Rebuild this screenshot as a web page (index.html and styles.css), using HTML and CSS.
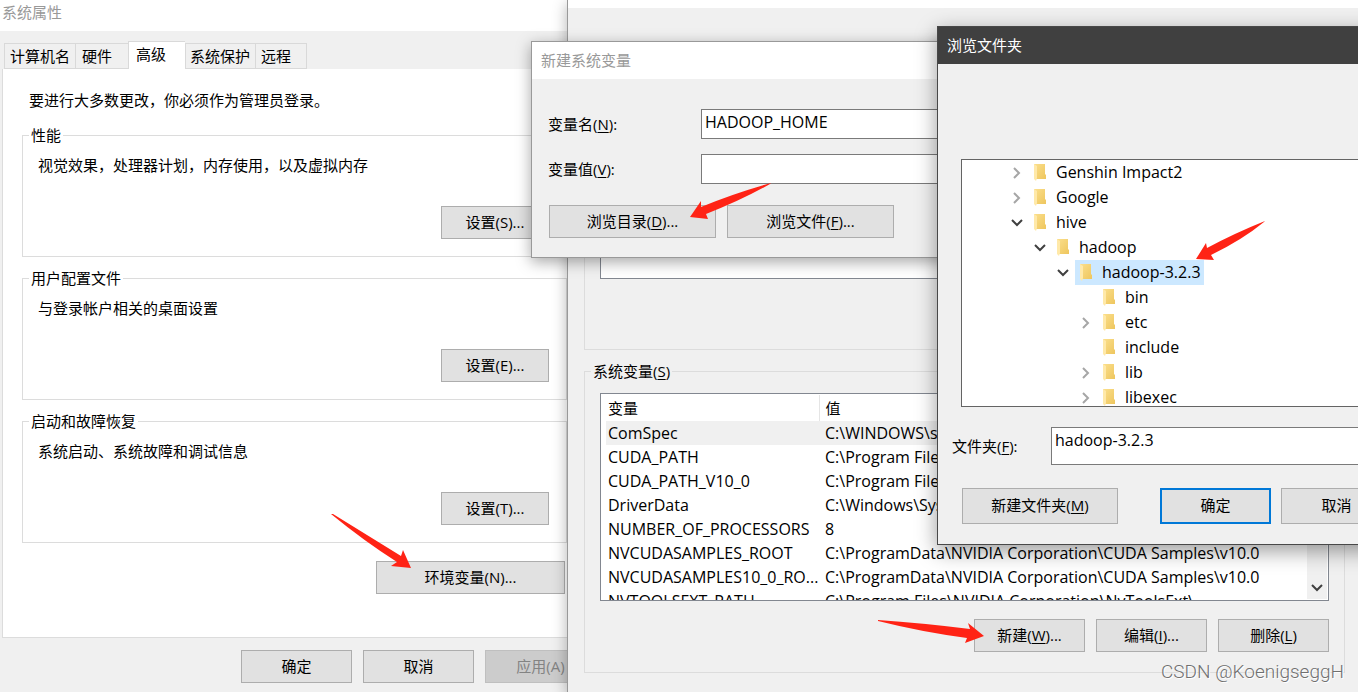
FILE: index.html
```html
<!DOCTYPE html>
<html lang="zh-CN">
<head>
<meta charset="utf-8">
<title>系统属性</title>
<link rel="stylesheet" href="styles.css">
</head>
<body>
<svg class="defs" aria-hidden="true">
  <defs>
    <linearGradient id="folderFill" x1="0" y1="0" x2="1" y2="1">
      <stop offset="0" stop-color="#fbdf8c"/>
      <stop offset="1" stop-color="#eec65e"/>
    </linearGradient>
    <symbol id="folder" viewBox="0 0 13 18">
      <path d="M1 1H12V11L13 12V16H1Z" fill="url(#folderFill)"/>
      <path d="M1 1L4 3V15L3 18L1 16Z" fill="#ffe9a9"/>
    </symbol>
    <symbol id="closed" viewBox="0 0 12 12">
      <path d="M3 1L8 6L3 11" fill="none" stroke="#a6a6a6" stroke-width="2"/>
    </symbol>
    <symbol id="open" viewBox="0 0 12 12">
      <path d="M1 3L6 8L11 3" fill="none" stroke="#404040" stroke-width="2"/>
    </symbol>
  </defs>
</svg>
<main class="desktop">

  <section class="window props">
    <header class="titlebar">系统属性</header>
    <nav class="tabs">
      <button class="tab">计算机名</button>
      <button class="tab">硬件</button>
      <button class="tab active">高级</button>
      <button class="tab">系统保护</button>
      <button class="tab">远程</button>
    </nav>
    <div class="panel">
      <p class="intro">要进行大多数更改，你必须作为管理员登录。</p>
      <fieldset class="group">
        <legend>性能</legend>
        <p>视觉效果，处理器计划，内存使用，以及虚拟内存</p>
        <button class="btn">设置(S)...</button>
      </fieldset>
      <fieldset class="group">
        <legend>用户配置文件</legend>
        <p>与登录帐户相关的桌面设置</p>
        <button class="btn">设置(E)...</button>
      </fieldset>
      <fieldset class="group">
        <legend>启动和故障恢复</legend>
        <p>系统启动、系统故障和调试信息</p>
        <button class="btn">设置(T)...</button>
      </fieldset>
      <button class="btn env-btn">环境变量(N)...</button>
    </div>
    <footer class="props-actions">
      <button class="btn">确定</button>
      <button class="btn">取消</button>
      <button class="btn" disabled>应用(A)</button>
    </footer>
  </section>

  <section class="window env">
    <div class="env-title"></div>
    <div class="env-body">
      <fieldset class="vars user-vars">
        <div class="list"></div>
      </fieldset>
      <fieldset class="vars system-vars">
        <legend>系统变量(<u>S</u>)</legend>
        <div class="list">
          <div class="rows">
            <table class="table">
              <thead>
                <tr><th class="name">变量</th><th>值</th></tr>
              </thead>
              <tbody>
                <tr class="selected"><td>ComSpec</td><td>C:\WINDOWS\sy</td></tr>
                <tr><td>CUDA_PATH</td><td>C:\Program File</td></tr>
                <tr><td>CUDA_PATH_V10_0</td><td>C:\Program File</td></tr>
                <tr><td>DriverData</td><td>C:\Windows\Sys</td></tr>
                <tr><td>NUMBER_OF_PROCESSORS</td><td>8</td></tr>
                <tr><td>NVCUDASAMPLES_ROOT</td><td>C:\ProgramData\NVIDIA Corporation\CUDA Samples\v10.0</td></tr>
                <tr><td>NVCUDASAMPLES10_0_RO...</td><td>C:\ProgramData\NVIDIA Corporation\CUDA Samples\v10.0</td></tr>
                <tr><td>NVTOOLSEXT_PATH</td><td>C:\Program Files\NVIDIA Corporation\NvToolsExt\</td></tr>
              </tbody>
            </table>
          </div>
          <div class="scrollbar"><svg width="12" height="12"><use href="#open"/></svg></div>
        </div>
        <div class="env-actions">
          <button class="btn">新建(<u>W</u>)...</button>
          <button class="btn">编辑(<u>I</u>)...</button>
          <button class="btn">删除(<u>L</u>)</button>
        </div>
      </fieldset>
    </div>
  </section>

  <section class="window newvar">
    <header class="titlebar">新建系统变量</header>
    <div class="newvar-body">
      <div class="field">
        <label for="var-name">变量名(<u>N</u>):</label>
        <input id="var-name" type="text" value="HADOOP_HOME">
      </div>
      <div class="field">
        <label for="var-value">变量值(<u>V</u>):</label>
        <input id="var-value" type="text" value="">
      </div>
      <div class="newvar-actions">
        <button class="btn">浏览目录(<u>D</u>)...</button>
        <button class="btn">浏览文件(<u>F</u>)...</button>
      </div>
    </div>
  </section>

  <section class="window browse">
    <header class="titlebar">浏览文件夹</header>
    <div class="browse-body">
      <ul class="tree">
        <li class="level1"><svg class="arrow"><use href="#closed"/></svg><span class="node"><svg class="folder"><use href="#folder"/></svg>Genshin Impact2</span></li>
        <li class="level1"><svg class="arrow"><use href="#closed"/></svg><span class="node"><svg class="folder"><use href="#folder"/></svg>Google</span></li>
        <li class="level1"><svg class="arrow"><use href="#open"/></svg><span class="node"><svg class="folder"><use href="#folder"/></svg>hive</span></li>
        <li class="level2"><svg class="arrow"><use href="#open"/></svg><span class="node"><svg class="folder"><use href="#folder"/></svg>hadoop</span></li>
        <li class="level3"><svg class="arrow"><use href="#open"/></svg><span class="node current"><svg class="folder"><use href="#folder"/></svg>hadoop-3.2.3</span></li>
        <li class="level4"><svg class="arrow"></svg><span class="node"><svg class="folder"><use href="#folder"/></svg>bin</span></li>
        <li class="level4"><svg class="arrow"><use href="#closed"/></svg><span class="node"><svg class="folder"><use href="#folder"/></svg>etc</span></li>
        <li class="level4"><svg class="arrow"></svg><span class="node"><svg class="folder"><use href="#folder"/></svg>include</span></li>
        <li class="level4"><svg class="arrow"><use href="#closed"/></svg><span class="node"><svg class="folder"><use href="#folder"/></svg>lib</span></li>
        <li class="level4"><svg class="arrow"><use href="#closed"/></svg><span class="node"><svg class="folder"><use href="#folder"/></svg>libexec</span></li>
      </ul>
      <div class="folder-field">
        <label for="folder-name">文件夹(<u>F</u>):</label>
        <input id="folder-name" type="text" value="hadoop-3.2.3">
      </div>
      <div class="browse-actions">
        <button class="btn make">新建文件夹(<u>M</u>)</button>
        <button class="btn default">确定</button>
        <button class="btn">取消</button>
      </div>
    </div>
  </section>

  <svg class="pointers" width="1358" height="692" aria-hidden="true">
    <g fill="#ff2315">
      <path d="M331 514L333 514L401 556L403 550L411 568L391 566L397 562Q364 541 331 514Z"/>
      <path d="M771 183L770 184Q742 200 706 214L708 219L690 217L701 201L701 207Q735 193 771 183Z"/>
      <path d="M1265 221L1264 222Q1242 240 1211 255L1214 260L1196 259L1206 243L1207 248Q1235 233 1265 221Z"/>
      <path d="M878 620Q922 623 970 629L968 623L984 636L965 643L967 638Q922 632 878 621Z"/>
    </g>
  </svg>
  <div class="watermark">CSDN @KoenigseggH</div>
</main>
</body>
</html>
```

FILE: styles.css
```css
* { box-sizing: border-box; }

body {
  margin: 0;
  font: 15px/20px "Open Sans", "Noto Sans CJK SC", sans-serif;
  color: #000;
}

p, ul { margin: 0; padding: 0; }

button, input { font: inherit; color: inherit; }

u { text-underline-offset: 2px; }

.defs { position: absolute; width: 0; height: 0; }

.desktop {
  position: relative;
  height: 100vh;
  min-height: 692px;
  overflow: hidden;
  background: #f0f0f0;
}

/* Windows are stacked freely on the desktop */
.window { position: absolute; background: #f0f0f0; }

.titlebar {
  display: flex;
  align-items: center;
  height: 37px;
  padding: 0 9px 2px;
  background: #fff;
  color: #999;
}

.btn {
  width: 111px;
  height: 33px;
  padding: 0 0 2px;
  border: 1px solid #adadad;
  border-radius: 0;
  background: #e1e1e1;
  white-space: nowrap;
}

.btn:disabled { border-color: #bfbfbf; background: #ccc; color: #838383; }

/* System properties */
.props { left: 0; top: 0; bottom: 0; width: 587px; }

.props .titlebar { height: 31px; padding: 0 2px 8px; }

.tabs {
  display: flex;
  align-items: flex-end;
  height: 38px;
  padding-left: 4px;
}

.tab {
  height: 26px;
  padding: 0 5px;
  border: 1px solid #d9d9d9;
  border-right: 0;
  background: #f0f0f0;
}

.tab:nth-child(2) { padding: 0 16px 0 6px; }

.tab:last-child { padding-right: 15px; border-right: 1px solid #d9d9d9; }

.tab.active {
  height: 28px;
  padding: 0 19px 4px 7px;
  border-bottom: 0;
  background: #fff;
}

.tab.active + .tab { padding: 0 5px 0 4px; }

.panel {
  display: flex;
  flex-direction: column;
  gap: 11px;
  margin: 0 2px;
  padding: 21px 17px 43px 19px;
  border: 1px solid #dcdcdc;
  border-top: 0;
  background: #fff;
}

.intro { padding-left: 7px; margin-bottom: 4px; }

.group {
  display: flex;
  flex-direction: column;
  gap: 31px;
  width: 545px;
  height: 132px;
  margin: 0;
  padding: 10px 17px 0 15px;
  border: 1px solid #dcdcdc;
}

legend { margin-left: -9px; padding: 0 2px; }

.group .btn { width: 108px; align-self: flex-end; }

.env-btn { width: 189px; margin: 7px 0 0 354px; }

.props-actions { display: flex; gap: 11px; padding: 12px 0 0 241px; }

.props-actions .btn { flex: none; }

/* Environment variables */
.env {
  left: 567px;
  right: -7px;
  top: 0;
  bottom: 0;
  border-left: 1px solid #999;
  box-shadow: 0 4px 14px rgba(0, 0, 0, .3);
}

.env-title { height: 8px; background: #fff; }

.env-body {
  display: flex;
  flex-direction: column;
  gap: 11px;
  padding: 60px 20px 0 16px;
}

.vars { min-width: 0; margin: 0; padding: 0 15px; border: 1px solid #dcdcdc; }

.user-vars { height: 282px; }

.user-vars .list { height: 210px; }

.system-vars { height: 312px; }

.system-vars .list { height: 208px; margin-top: 12px; }

.list {
  display: flex;
  overflow: hidden;
  padding: 1px;
  border: 1px solid #828790;
  background: #fff;
}

.rows { flex: 1; min-width: 0; padding-left: 4px; }

.table {
  width: 100%;
  border-collapse: collapse;
  table-layout: fixed;
}

.table th, .table td {
  overflow: hidden;
  height: 24px;
  padding: 0 0 0 2px;
  line-height: 24px;
  text-align: left;
  text-overflow: ellipsis;
  white-space: nowrap;
}

.table td { font-size: 16px; }

.table th { height: 26px; font-weight: 400; }

.table .name { width: 213px; border-right: 1px solid #e5e5e5; }

.table th + th, .table td + td { padding-left: 6px; }

.table .selected { background: #f0f0f0; }

.scrollbar {
  display: flex;
  flex: none;
  align-items: flex-end;
  justify-content: center;
  width: 20px;
  padding-bottom: 5px;
  background: #f0f0f0;
}

.env-actions { display: flex; justify-content: flex-end; gap: 11px; margin-top: 18px; }

/* New system variable */
.newvar {
  left: 531px;
  top: 41px;
  width: 450px;
  border: 1px solid #999;
  box-shadow: 0 4px 14px rgba(0, 0, 0, .35);
}

.newvar-body { padding: 30px 0 19px 16px; }

.field { display: flex; align-items: center; margin-bottom: 15px; }

.field label { width: 153px; }

input {
  flex: 1;
  min-width: 0;
  height: 30px;
  padding: 0 3px 4px;
  border: 1px solid #7a7a7a;
  border-radius: 0;
  background: #fff;
}

input[type="text"] { font-size: 16px; }

.newvar-actions { display: flex; gap: 11px; padding: 6px 0 0 1px; }

.newvar-actions .btn { width: 167px; }

/* Browse for folder */
.browse {
  left: 937px;
  right: -60px;
  top: 26px;
  border: 1px solid #484848;
  box-shadow: 0 6px 20px rgba(0, 0, 0, .4);
}

.browse .titlebar { background: #404040; color: #fff; }

.browse-body { padding: 95px 24px 20px 14px; }

.tree {
  height: 248px;
  margin-left: 9px;
  overflow: hidden;
  border: 1px solid #646464;
  background: #fff;
  font-size: 16px;
  list-style: none;
}

.tree li { display: flex; align-items: center; height: 25px; }

.level1 { padding-left: 49px; }
.level2 { padding-left: 72px; }
.level3 { padding-left: 95px; }
.level4 { padding-left: 118px; }

.arrow { width: 12px; height: 12px; margin-right: 6px; }

.node {
  display: flex;
  align-items: center;
  gap: 10px;
  height: 25px;
  padding: 0 3px 2px 4px;
}

.current { background: #cce8ff; }

.folder { width: 13px; height: 18px; }

.folder-field { display: flex; align-items: center; margin-top: 20px; }

.folder-field label { width: 99px; }

.folder-field input { height: 38px; padding-bottom: 12px; }

.browse-actions { display: flex; gap: 10px; margin: 23px 0 0 10px; }

.browse-actions .btn { flex: none; height: 36px; }

.browse-actions .make { width: 156px; margin-right: 32px; }

.browse-actions .default { border: 2px solid #0078d7; }

/* Annotations drawn over the windows */
.pointers { position: absolute; left: 0; top: 0; }

.watermark {
  position: absolute;
  right: 14px;
  bottom: 8px;
  font: 300 19px/24px Roboto, sans-serif;
  color: #707070;
  text-shadow: 1px 1px 0 #fff;
}
```
